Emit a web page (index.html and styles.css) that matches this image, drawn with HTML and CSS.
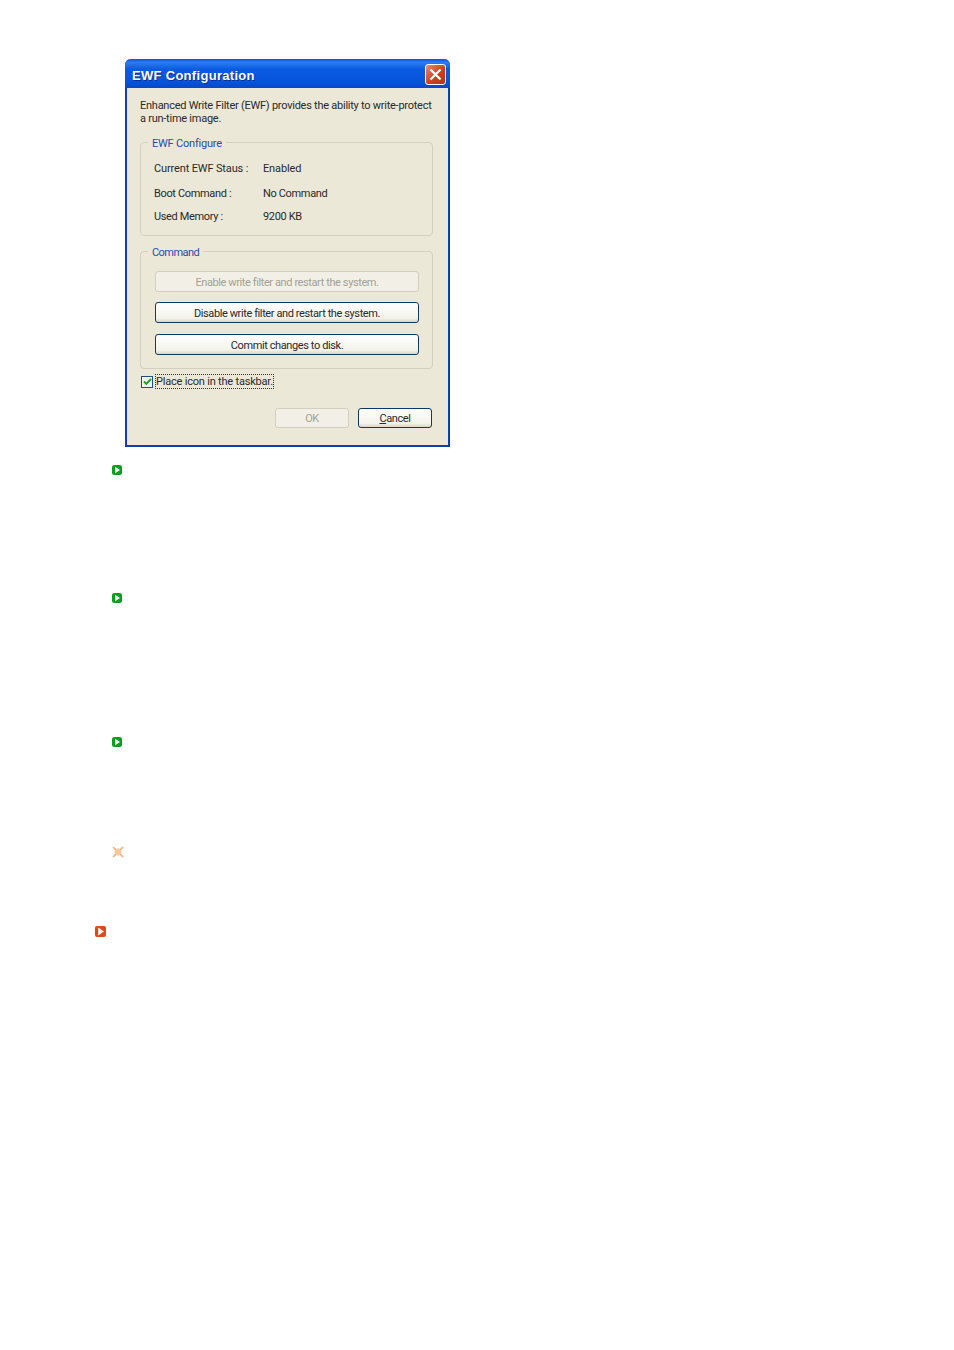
FILE: index.html
```html
<!DOCTYPE html>
<html lang="en">
<head>
<meta charset="utf-8">
<title>EWF Configuration</title>
<link rel="stylesheet" href="styles.css">
</head>
<body>
<main class="page">
  <section class="dialog">
    <header class="titlebar">
      <h1 class="title">EWF Configuration</h1>
      <span class="close">
        <svg width="17" height="17" viewBox="0 0 17 17"><path d="M3.5 3.5l10 10M13.5 3.5l-10 10" stroke="#fff" stroke-width="2.4" fill="none"/></svg>
      </span>
    </header>
    <div class="content">
      <p class="intro">Enhanced Write Filter (EWF) provides the ability to write-protect<br>a run-time image.</p>
      <fieldset class="group group-info">
        <legend class="legend">EWF Configure</legend>
        <div class="row row-a"><span class="key">Current EWF Staus :</span><span>Enabled</span></div>
        <div class="row row-b"><span class="key">Boot Command :</span><span>No Command</span></div>
        <div class="row row-c"><span class="key">Used Memory :</span><span>9200 KB</span></div>
      </fieldset>
      <fieldset class="group group-command">
        <legend class="legend">Command</legend>
        <div class="btn btn-wide btn-off btn-first">Enable write filter and restart the system.</div>
        <div class="btn btn-wide btn-second">Disable write filter and restart the system.</div>
        <div class="btn btn-wide btn-third">Commit changes to disk.</div>
      </fieldset>
      <div class="check-row">
        <span class="check">
          <svg width="9" height="9" viewBox="0 0 9 9"><path d="M1 4.5l2.4 2.4L8 1.8" stroke="#21a121" stroke-width="2" fill="none"/></svg>
        </span>
        <span class="check-label">Place icon in the taskbar.</span>
      </div>
      <div class="actions">
        <div class="btn btn-small btn-off">OK</div>
        <div class="btn btn-small"><span><u>C</u>ancel</span></div>
      </div>
    </div>
  </section>
  <div class="marker m1"><svg width="10" height="10" viewBox="0 0 10 10"><rect width="10" height="10" rx="2.5" fill="#0e9c1c"/><path d="M3.2 1.8L8 5 3.2 8.2z" fill="#fff"/></svg></div>
  <div class="marker m2"><svg width="10" height="10" viewBox="0 0 10 10"><rect width="10" height="10" rx="2.5" fill="#0e9c1c"/><path d="M3.2 1.8L8 5 3.2 8.2z" fill="#fff"/></svg></div>
  <div class="marker m3"><svg width="10" height="10" viewBox="0 0 10 10"><rect width="10" height="10" rx="2.5" fill="#0e9c1c"/><path d="M3.2 1.8L8 5 3.2 8.2z" fill="#fff"/></svg></div>
  <div class="marker m4"><svg width="12" height="12" viewBox="0 0 12 12"><path d="M1 1l10 10M11 1L1 11" stroke="#fba873" stroke-width="1.6" fill="none"/><path d="M6 2l4 4-4 4-4-4z" fill="#fcc59b"/></svg></div>
  <div class="marker m5"><svg width="11" height="11" viewBox="0 0 11 11"><rect width="11" height="11" rx="2" fill="#e2471c"/><path d="M3.2 1.6L9 5.5 3.2 9.4z" fill="#fff"/></svg></div>
</main>
</body>
</html>
```
FILE: styles.css
```css
* { box-sizing: border-box; }
html, body { margin: 0; background: #fff; }
body { font-family: Roboto, "Liberation Sans", Arial, sans-serif; font-size: 11px; color: #2a2a2a; }
.page { height: 1350px; padding-top: 59px; overflow: hidden; }

.dialog {
  width: 325px; height: 388px; margin-left: 125px;
  border: 2px solid #0a3fb8; border-top: 0; border-radius: 6px 6px 0 0;
  background: #ebe8d8;
}
.titlebar {
  height: 29px; margin: 0 -2px; padding: 2px 4px 0 7px;
  display: flex; align-items: center; justify-content: space-between;
  border-radius: 6px 6px 0 0;
  background: linear-gradient(#0a55d8 0, #2a7cf0 12%, #0b5be2 35%, #0654dc 80%, #0a48c4 100%);
}
.title {
  margin: 0; padding-top: 2px; font-family: "Liberation Sans", Arial, sans-serif; font-size: 13px; font-weight: 700; color: #fff;
  letter-spacing: .3px; text-shadow: 1px 1px 0 #0a2f90;
}
.close {
  width: 21px; height: 21px; display: flex; align-items: center; justify-content: center;
  border: 1px solid #fff; border-radius: 3px;
  background: linear-gradient(135deg, #e88a70, #d2401c 55%, #b9340f);
}
.content { padding: 11px 15px 0 13px; }
.intro { margin: 0; line-height: 13px; letter-spacing: -.25px; white-space: nowrap; }
.group {
  margin: 0; padding: 0; min-width: 0;
  border: 1px solid #d3d0bf; border-radius: 4px;
}
.group-info { height: 94px; margin-top: 17px; }
.group-command { height: 118px; margin-top: 15px; }
.legend { margin-left: 7px; padding: 0 4px; color: #1c4fae; line-height: 3px; height: 1px; letter-spacing: -.2px; }
.group-command .legend { letter-spacing: -.55px; }
.row { display: flex; margin-left: 13px; line-height: 14px; letter-spacing: -.14px; }
.key { width: 109px; }
.row-a { margin-top: 19px; }
.row-b { margin-top: 11px; letter-spacing: -.35px; }
.row-c { margin-top: 9px; letter-spacing: -.35px; }

.btn {
  display: flex; align-items: center; justify-content: center;
  padding-top: 1px;
  border: 1px solid #0f3a68; border-radius: 3px;
  background: linear-gradient(#fff, #f3f2ea 80%, #d9d6c8);
  color: #2a2a2a; letter-spacing: -.4px;
}
.btn-wide { width: 264px; height: 21px; margin-left: 14px; }
.btn-first { margin-top: 19px; }
.btn-second { margin-top: 10px; }
.btn-third { margin-top: 11px; }
.btn-small { width: 74px; height: 20px; padding-top: 0; }
.btn-off { border-color: #d2cfc0; background: #f2f0e6; color: #a3a193; }

.check-row { display: flex; align-items: center; height: 15px; margin-top: 5px; }
.check {
  width: 12px; height: 12px; margin-left: 1px;
  display: flex; align-items: center; justify-content: center;
  border: 1px solid #1c5180; background: #f4f4ee;
}
.check-label { margin-left: 2px; padding-top: 1px; line-height: 12px; border: 1px dotted #333; letter-spacing: -.2px; white-space: nowrap; }
.actions { display: flex; justify-content: flex-end; gap: 9px; margin: 19px 1px 0 0; }

.marker { line-height: 0; }
.m1 { margin: 18px 0 0 112px; }
.m2 { margin: 118px 0 0 112px; }
.m3 { margin: 134px 0 0 112px; }
.m4 { margin: 99px 0 0 112px; }
.m5 { margin: 68px 0 0 95px; }
```
